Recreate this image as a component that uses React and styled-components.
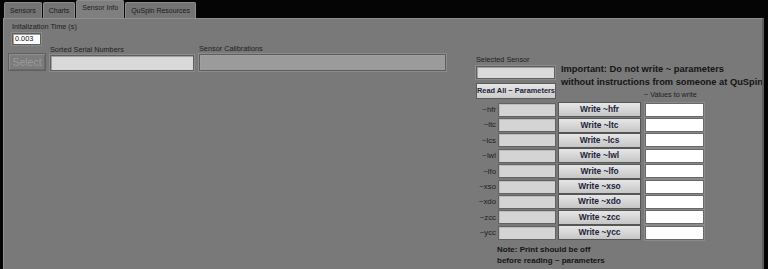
import React from 'react';
import styled, { createGlobalStyle } from 'styled-components';

const GlobalStyle = createGlobalStyle`
  html, body {
    margin: 0;
    padding: 0;
    background: #050505;
  }
  body {
    width: 768px;
    height: 269px;
    overflow: hidden;
    font-family: 'Liberation Sans', Arial, sans-serif;
  }
`;

const Window = styled.div`
  width: 768px;
  height: 269px;
  display: flex;
  flex-direction: column;
  background: #050505;
`;

const TabStrip = styled.div`
  height: 18px;
  display: flex;
  align-items: flex-end;
  padding: 0 0 0 4px;
`;

const Tab = styled.div`
  height: ${props => (props.active ? '17px' : '15px')};
  padding: 0 5px;
  margin: 0 1px 0 0;
  background: ${props => (props.active ? '#7f7f7f' : '#747474')};
  border: 1px solid #8c8c8c;
  border-bottom: none;
  border-radius: 2px 2px 0 0;
  font-size: 7px;
  line-height: ${props => (props.active ? '14px' : '15px')};
  color: #1c1c1c;
  white-space: nowrap;
`;

const Panel = styled.div`
  flex: 1;
  margin: 0 4px 0 3px;
  background: #797979;
  border-top: 1px solid #8e8e8e;
  border-left: 1px solid #939393;
  border-right: 2px solid #5c5c5c;
  display: flex;
  overflow: hidden;
`;

const LeftArea = styled.div`
  box-sizing: border-box;
  flex: 0 0 448px;
  padding: 3px 0 0 4px;
  display: flex;
  flex-direction: column;
`;

const Label = styled.div`
  font-size: 7.3px;
  line-height: 9px;
  color: #1e1e1e;
  white-space: nowrap;
`;

const InitBlock = styled.div`
  padding: 0 0 0 4px;
  display: flex;
  flex-direction: column;
  gap: 2px;
`;

const Control = styled.div`
  box-sizing: border-box;
  width: ${props => props.w}px;
  height: ${props => props.h}px;
  background: ${props => props.bg || '#ffffff'};
  border: 1px solid #5e5e5e;
  box-shadow: inset 1px 1px 0 #a0a0a0;
  outline: 1px solid #8c8c8c;
  font-size: 7.3px;
  line-height: ${props => props.h - 2}px;
  padding: 0 0 0 2px;
  color: #111;
`;

const SelectRow = styled.div`
  display: flex;
  align-items: flex-end;
  margin: -1px 0 0;
`;

const Field = styled.div`
  display: flex;
  flex-direction: column;
  gap: 1px;
  margin: 0 0 0 ${props => props.ml || 0}px;
`;

const SelectButton = styled.div`
  box-sizing: border-box;
  width: 38px;
  height: 18px;
  border: 1px solid #5f5f5f;
  background: #7c7c7c;
  box-shadow: inset 1px 1px 0 #8e8e8e, inset -1px -1px 0 #6a6a6a;
  font-size: 10.5px;
  line-height: 16px;
  text-align: center;
  color: #9a9a9a;
`;

const RightArea = styled.div`
  min-width: 0;
  padding: 36px 0 0 24px;
  display: flex;
  flex-direction: column;
`;

const TopRight = styled.div`
  display: flex;
`;

const SensorStack = styled.div`
  width: 80px;
  display: flex;
  flex-direction: column;
  gap: 2px;
`;

const ReadButton = styled.div`
  box-sizing: border-box;
  width: 80px;
  height: 16px;
  margin: 2px 0 0;
  background: linear-gradient(#e6e6e6, #cbcbcb);
  border: 1px solid #5a5a5a;
  font-size: 7.4px;
  font-weight: 700;
  line-height: 14px;
  text-align: center;
  color: #23233a;
  white-space: nowrap;
`;

const Notice = styled.div`
  display: flex;
  flex-direction: column;
  justify-content: space-between;
`;

const Important = styled.div`
  padding: 8px 0 0 5px;
  font-size: 9.3px;
  font-weight: 700;
  line-height: 13px;
  color: #141414;
  white-space: nowrap;
`;

const ValuesHeader = styled.div`
  padding: 0 0 0 88px;
  font-size: 7.2px;
  line-height: 8px;
  color: #1e1e1e;
  white-space: nowrap;
`;

const ParamGrid = styled.div`
  display: grid;
  grid-template-columns: 22px 60px 86px 61px;
  grid-auto-rows: 15.375px;
  margin: 3px 0 0;
`;

const ParamName = styled.div`
  font-size: 7.8px;
  line-height: 15px;
  text-align: right;
  padding: 0 2px 0 0;
  color: #1e1e1e;
`;

const Cell = styled.div`
  display: flex;
  align-items: center;
  padding: 0 0 0 ${props => props.pl || 0}px;
`;

const Indicator = styled.div`
  box-sizing: border-box;
  width: 58px;
  height: 14px;
  background: #d4d4d4;
  border: 1px solid #626262;
  box-shadow: inset 1px 1px 0 #bcbcbc;
`;

const WriteButton = styled.div`
  box-sizing: border-box;
  width: 83px;
  height: 15px;
  background: linear-gradient(#e6e6e6, #c6c6c6);
  border: 1px solid #555555;
  font-size: 8.4px;
  font-weight: 700;
  line-height: 13px;
  text-align: center;
  color: #22223a;
  white-space: nowrap;
`;

const ValueInput = styled.div`
  box-sizing: border-box;
  width: 59px;
  height: 14px;
  background: #ffffff;
  border: 1px solid #686868;
  box-shadow: 0 0 0 1px #8a8a8a;
`;

const Note = styled.div`
  padding: 4px 0 0 21px;
  font-size: 8px;
  font-weight: 700;
  line-height: 11px;
  color: #141414;
  white-space: nowrap;
`;

const params = ['hfr', 'ltc', 'lcs', 'lwl', 'lfo', 'xso', 'xdo', 'zcc', 'ycc'];

export default function App() {
  return (
    <Window>
      <GlobalStyle />
      <TabStrip>
        <Tab>Sensors</Tab>
        <Tab>Charts</Tab>
        <Tab active>Sensor Info</Tab>
        <Tab>QuSpin Resources</Tab>
      </TabStrip>
      <Panel>
        <LeftArea>
          <InitBlock>
            <Label>Initalization Time (s)</Label>
            <Control w={29} h={12}>0.003</Control>
          </InitBlock>
          <SelectRow>
            <SelectButton>Select</SelectButton>
            <Field ml={4}>
              <Label>Sorted Serial Numbers</Label>
              <Control w={144} h={16} bg="#d9d9d9" />
            </Field>
            <Field ml={5}>
              <Label>Sensor Calibrations</Label>
              <Control w={247} h={17} bg="#9b9b9b" />
            </Field>
          </SelectRow>
        </LeftArea>
        <RightArea>
          <TopRight>
            <SensorStack>
              <Label>Selected Sensor</Label>
              <Control w={79} h={13} bg="#dadada" />
              <ReadButton>Read All ~ Parameters</ReadButton>
            </SensorStack>
            <Notice>
              <Important>
                Important: Do not write ~ parameters
                <br />
                without instructions from someone at QuSpin
              </Important>
              <ValuesHeader>~ Values to write</ValuesHeader>
            </Notice>
          </TopRight>
          <ParamGrid>
            {params.map(p => (
              <React.Fragment key={p}>
                <ParamName>~{p}</ParamName>
                <Cell>
                  <Indicator />
                </Cell>
                <Cell>
                  <WriteButton>Write ~{p}</WriteButton>
                </Cell>
                <Cell pl={1}>
                  <ValueInput />
                </Cell>
              </React.Fragment>
            ))}
          </ParamGrid>
          <Note>
            Note: Print should be off
            <br />
            before reading ~ parameters
          </Note>
        </RightArea>
      </Panel>
    </Window>
  );
}
